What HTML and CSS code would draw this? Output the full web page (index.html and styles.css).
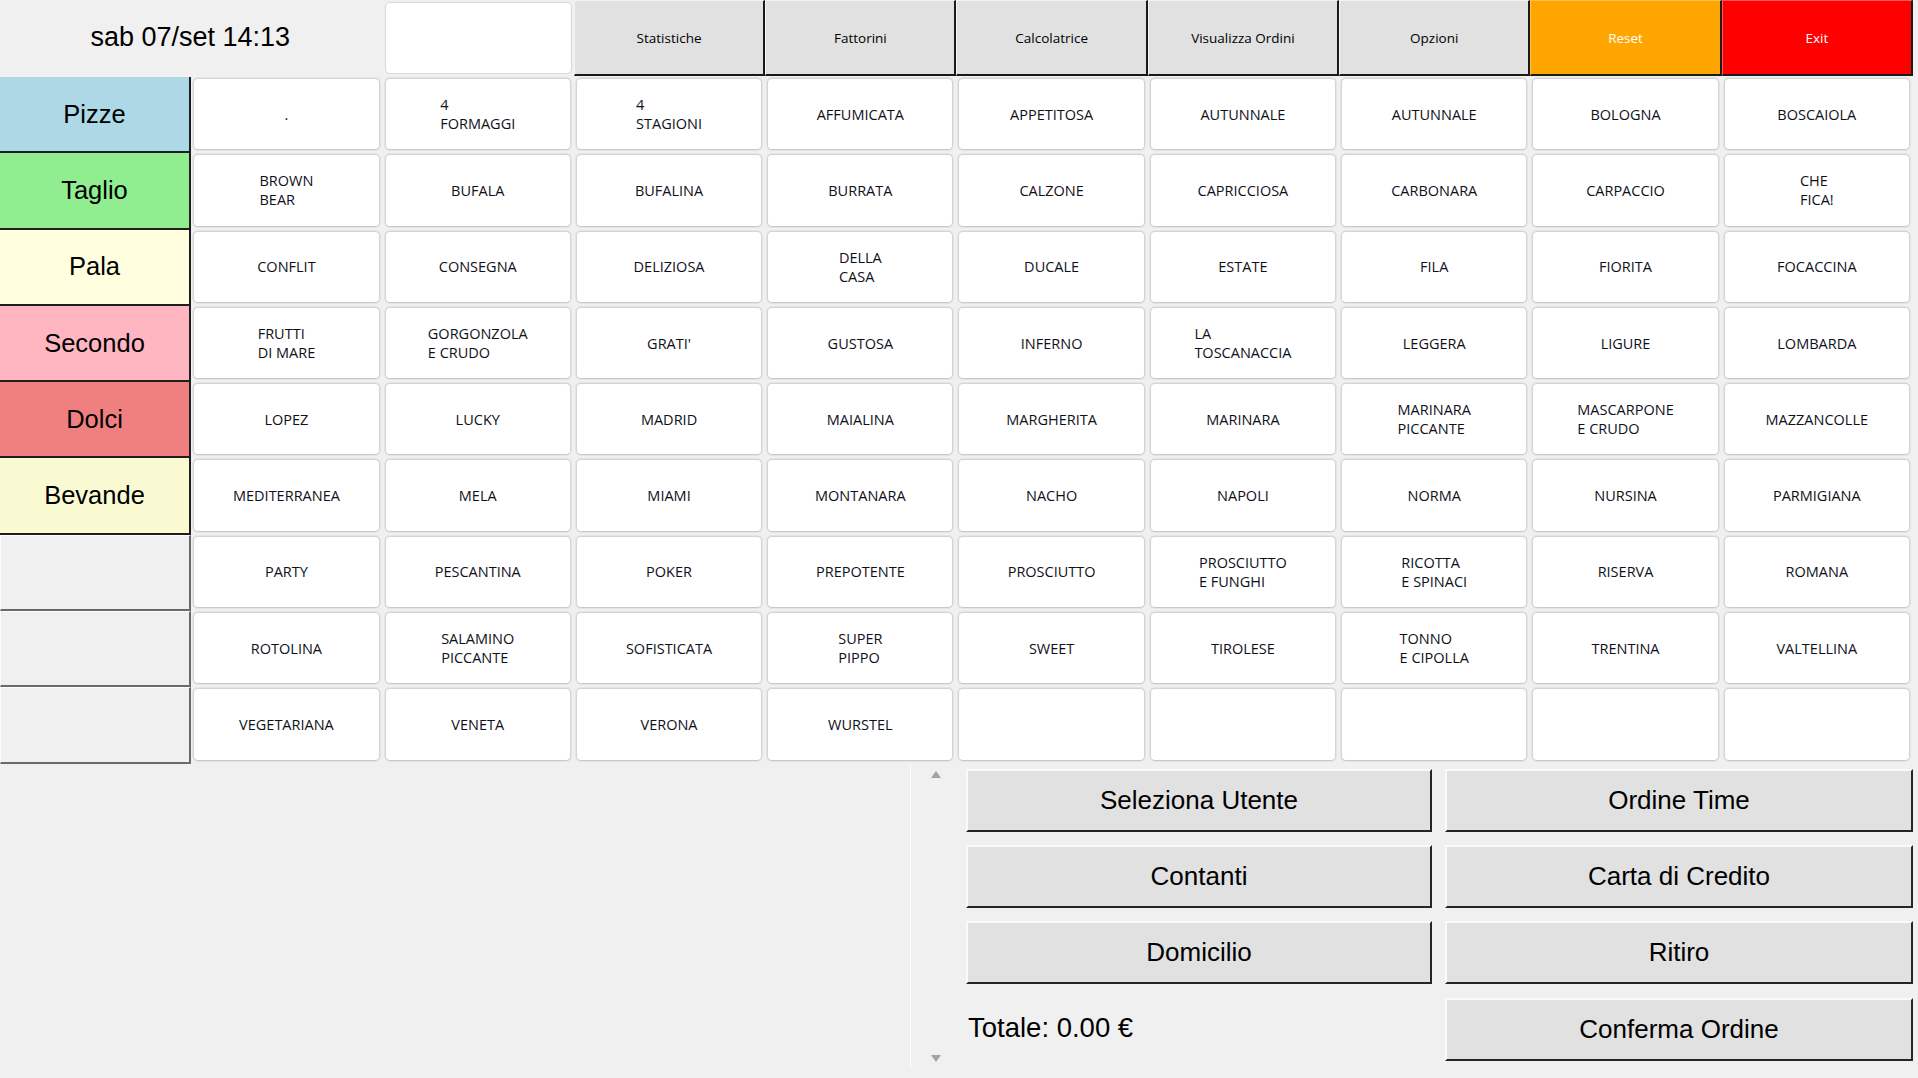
FILE: index.html
```
<!DOCTYPE html>
<html lang="it">
<head>
<meta charset="utf-8">
<title>Cassa</title>
<link rel="stylesheet" href="styles.css">
</head>
<body>
<div class="app">
  <header class="topbar">
    <div class="clock">sab 07/set 14:13</div>
    <div class="blank"></div>
    <button class="tb">Statistiche</button>
    <button class="tb">Fattorini</button>
    <button class="tb">Calcolatrice</button>
    <button class="tb">Visualizza Ordini</button>
    <button class="tb">Opzioni</button>
    <button class="tb tb-reset">Reset</button>
    <button class="tb tb-exit">Exit</button>
  </header>

  <main class="menu">
    <button class="cat cat-pizze">Pizze</button>
    <button class="item">.</button>
    <button class="item"><span>4<br>FORMAGGI</span></button>
    <button class="item"><span>4<br>STAGIONI</span></button>
    <button class="item">AFFUMICATA</button>
    <button class="item">APPETITOSA</button>
    <button class="item">AUTUNNALE</button>
    <button class="item">AUTUNNALE</button>
    <button class="item">BOLOGNA</button>
    <button class="item">BOSCAIOLA</button>

    <button class="cat cat-taglio">Taglio</button>
    <button class="item"><span>BROWN<br>BEAR</span></button>
    <button class="item">BUFALA</button>
    <button class="item">BUFALINA</button>
    <button class="item">BURRATA</button>
    <button class="item">CALZONE</button>
    <button class="item">CAPRICCIOSA</button>
    <button class="item">CARBONARA</button>
    <button class="item">CARPACCIO</button>
    <button class="item"><span>CHE<br>FICA!</span></button>

    <button class="cat cat-pala">Pala</button>
    <button class="item">CONFLIT</button>
    <button class="item">CONSEGNA</button>
    <button class="item">DELIZIOSA</button>
    <button class="item"><span>DELLA<br>CASA</span></button>
    <button class="item">DUCALE</button>
    <button class="item">ESTATE</button>
    <button class="item">FILA</button>
    <button class="item">FIORITA</button>
    <button class="item">FOCACCINA</button>

    <button class="cat cat-secondo">Secondo</button>
    <button class="item"><span>FRUTTI<br>DI MARE</span></button>
    <button class="item"><span>GORGONZOLA<br>E CRUDO</span></button>
    <button class="item">GRATI'</button>
    <button class="item">GUSTOSA</button>
    <button class="item">INFERNO</button>
    <button class="item"><span>LA<br>TOSCANACCIA</span></button>
    <button class="item">LEGGERA</button>
    <button class="item">LIGURE</button>
    <button class="item">LOMBARDA</button>

    <button class="cat cat-dolci">Dolci</button>
    <button class="item">LOPEZ</button>
    <button class="item">LUCKY</button>
    <button class="item">MADRID</button>
    <button class="item">MAIALINA</button>
    <button class="item">MARGHERITA</button>
    <button class="item">MARINARA</button>
    <button class="item"><span>MARINARA<br>PICCANTE</span></button>
    <button class="item"><span>MASCARPONE<br>E CRUDO</span></button>
    <button class="item">MAZZANCOLLE</button>

    <button class="cat cat-bevande">Bevande</button>
    <button class="item">MEDITERRANEA</button>
    <button class="item">MELA</button>
    <button class="item">MIAMI</button>
    <button class="item">MONTANARA</button>
    <button class="item">NACHO</button>
    <button class="item">NAPOLI</button>
    <button class="item">NORMA</button>
    <button class="item">NURSINA</button>
    <button class="item">PARMIGIANA</button>

    <button class="cat cat-empty"></button>
    <button class="item">PARTY</button>
    <button class="item">PESCANTINA</button>
    <button class="item">POKER</button>
    <button class="item">PREPOTENTE</button>
    <button class="item">PROSCIUTTO</button>
    <button class="item"><span>PROSCIUTTO<br>E FUNGHI</span></button>
    <button class="item"><span>RICOTTA<br>E SPINACI</span></button>
    <button class="item">RISERVA</button>
    <button class="item">ROMANA</button>

    <button class="cat cat-empty"></button>
    <button class="item">ROTOLINA</button>
    <button class="item"><span>SALAMINO<br>PICCANTE</span></button>
    <button class="item">SOFISTICATA</button>
    <button class="item"><span>SUPER<br>PIPPO</span></button>
    <button class="item">SWEET</button>
    <button class="item">TIROLESE</button>
    <button class="item"><span>TONNO<br>E CIPOLLA</span></button>
    <button class="item">TRENTINA</button>
    <button class="item">VALTELLINA</button>

    <button class="cat cat-empty"></button>
    <button class="item">VEGETARIANA</button>
    <button class="item">VENETA</button>
    <button class="item">VERONA</button>
    <button class="item">WURSTEL</button>
    <button class="item"></button>
    <button class="item"></button>
    <button class="item"></button>
    <button class="item"></button>
    <button class="item"></button>
  </main>

  <section class="bottom">
    <div class="orders"></div>
    <div class="scroll">
      <span class="arrow arrow-up"></span>
      <span class="arrow arrow-down"></span>
    </div>
    <div class="actions">
      <button class="act">Seleziona Utente</button>
      <button class="act">Ordine Time</button>
      <button class="act">Contanti</button>
      <button class="act">Carta di Credito</button>
      <button class="act">Domicilio</button>
      <button class="act">Ritiro</button>
      <div class="total">Totale: 0.00 €</div>
      <button class="act">Conferma Ordine</button>
    </div>
  </section>
</div>
</body>
</html>
```

FILE: styles.css
```
* {
  box-sizing: border-box;
}

html, body {
  margin: 0;
  padding: 0;
  background: #f0f0f0;
  overflow: hidden;
}

.app {
  width: 1918px;
  height: 1078px;
  background: #f0f0f0;
  font-family: "Liberation Sans", Arial, sans-serif;
  color: #000;
}

button {
  font: inherit;
  color: inherit;
  margin: 0;
  padding: 0;
  cursor: pointer;
}

/* ---------- top bar ---------- */
.topbar {
  display: grid;
  grid-template-columns: repeat(10, 191.3px);
  height: 77px;
}

.clock {
  grid-column: span 2;
  display: flex;
  align-items: center;
  justify-content: center;
  padding-right: 2px;
  height: 74px;
  font-size: 27px;
}

.blank {
  margin: 2px 2px 3px 2px;
  background: #fff;
  border: 1px solid #d8d8d8;
  border-radius: 5px;
}

.tb {
  height: 76px;
  background: #e1e1e1;
  border-top: 1px solid #f4f4f4;
  border-left: 1px solid #f4f4f4;
  border-right: 2px solid #1a1a1a;
  border-bottom: 2px solid #1a1a1a;
  font-family: "Open Sans", "Noto Sans", sans-serif;
  font-size: 13.5px;
  color: #000;
}

.tb-reset {
  background: #ffa500;
  color: #fff;
  border-top-color: #ffc04d;
  border-left-color: #ffc04d;
}

.tb-exit {
  background: #ff0000;
  color: #fff;
  border-top-color: #ff5a5a;
  border-left-color: #ff5a5a;
}

/* ---------- menu grid ---------- */
.menu {
  display: grid;
  grid-template-columns: repeat(10, 191.3px);
  grid-template-rows: repeat(9, 76.3px);
}

.cat {
  border: none;
  border-right: 2px solid #1e1e1e;
  border-bottom: 2px solid #1e1e1e;
  font-size: 25.5px;
  color: #000;
  width: 191px;
}

.cat-pizze { background: #add8e6; }
.cat-taglio { background: #90ee90; }
.cat-pala { background: #ffffe0; }
.cat-secondo { background: #ffb6c1; }
.cat-dolci { background: #f08080; }
.cat-bevande { background: #fafad2; }

.cat-empty {
  background: #f0f0f0;
  border-top: 1px solid #fcfcfc;
  border-left: 1px solid #fcfcfc;
  border-right: 2px solid #6a6a6a;
  border-bottom: 2px solid #6a6a6a;
}

.item {
  margin: 1px 3px 3px 2px;
  background: #fff;
  border: 1px solid #d4d4d4;
  border-bottom-color: #c8c8c8;
  box-shadow: 0 0 0 1px #e4e4e4;
  border-radius: 5px;
  display: flex;
  align-items: center;
  justify-content: center;
  font-family: "Open Sans", "Noto Sans", sans-serif;
  font-size: 14.5px;
  line-height: 19px;
  color: #10101a;
}

.item span {
  display: inline-block;
  text-align: left;
}

/* ---------- bottom section ---------- */
.bottom {
  display: flex;
  height: 314px;
}

.orders {
  width: 910px;
}

.scroll {
  width: 50px;
  margin-top: 1px;
  height: 303px;
  border-left: 1px solid #ffffff;
  display: flex;
  flex-direction: column;
  align-items: center;
  justify-content: space-between;
  padding: 6px 0 6px 0;
}

.arrow {
  width: 0;
  height: 0;
  border-left: 5px solid transparent;
  border-right: 5px solid transparent;
}

.arrow-up {
  border-bottom: 7px solid #a3a3a3;
}

.arrow-down {
  border-top: 7px solid #a3a3a3;
}

.actions {
  margin-left: 6px;
  padding-top: 5px;
  display: grid;
  grid-template-columns: 466px 468px;
  grid-template-rows: repeat(4, 63px);
  column-gap: 13px;
  row-gap: 13.3px;
}

.act {
  background: #e1e1e1;
  border-top: 2px solid #fafafa;
  border-left: 2px solid #fafafa;
  border-right: 2px solid #262626;
  border-bottom: 2px solid #262626;
  font-size: 26px;
  color: #000;
}

.total {
  display: flex;
  align-items: center;
  padding-left: 2px;
  padding-bottom: 2px;
  font-size: 27.5px;
}
```
